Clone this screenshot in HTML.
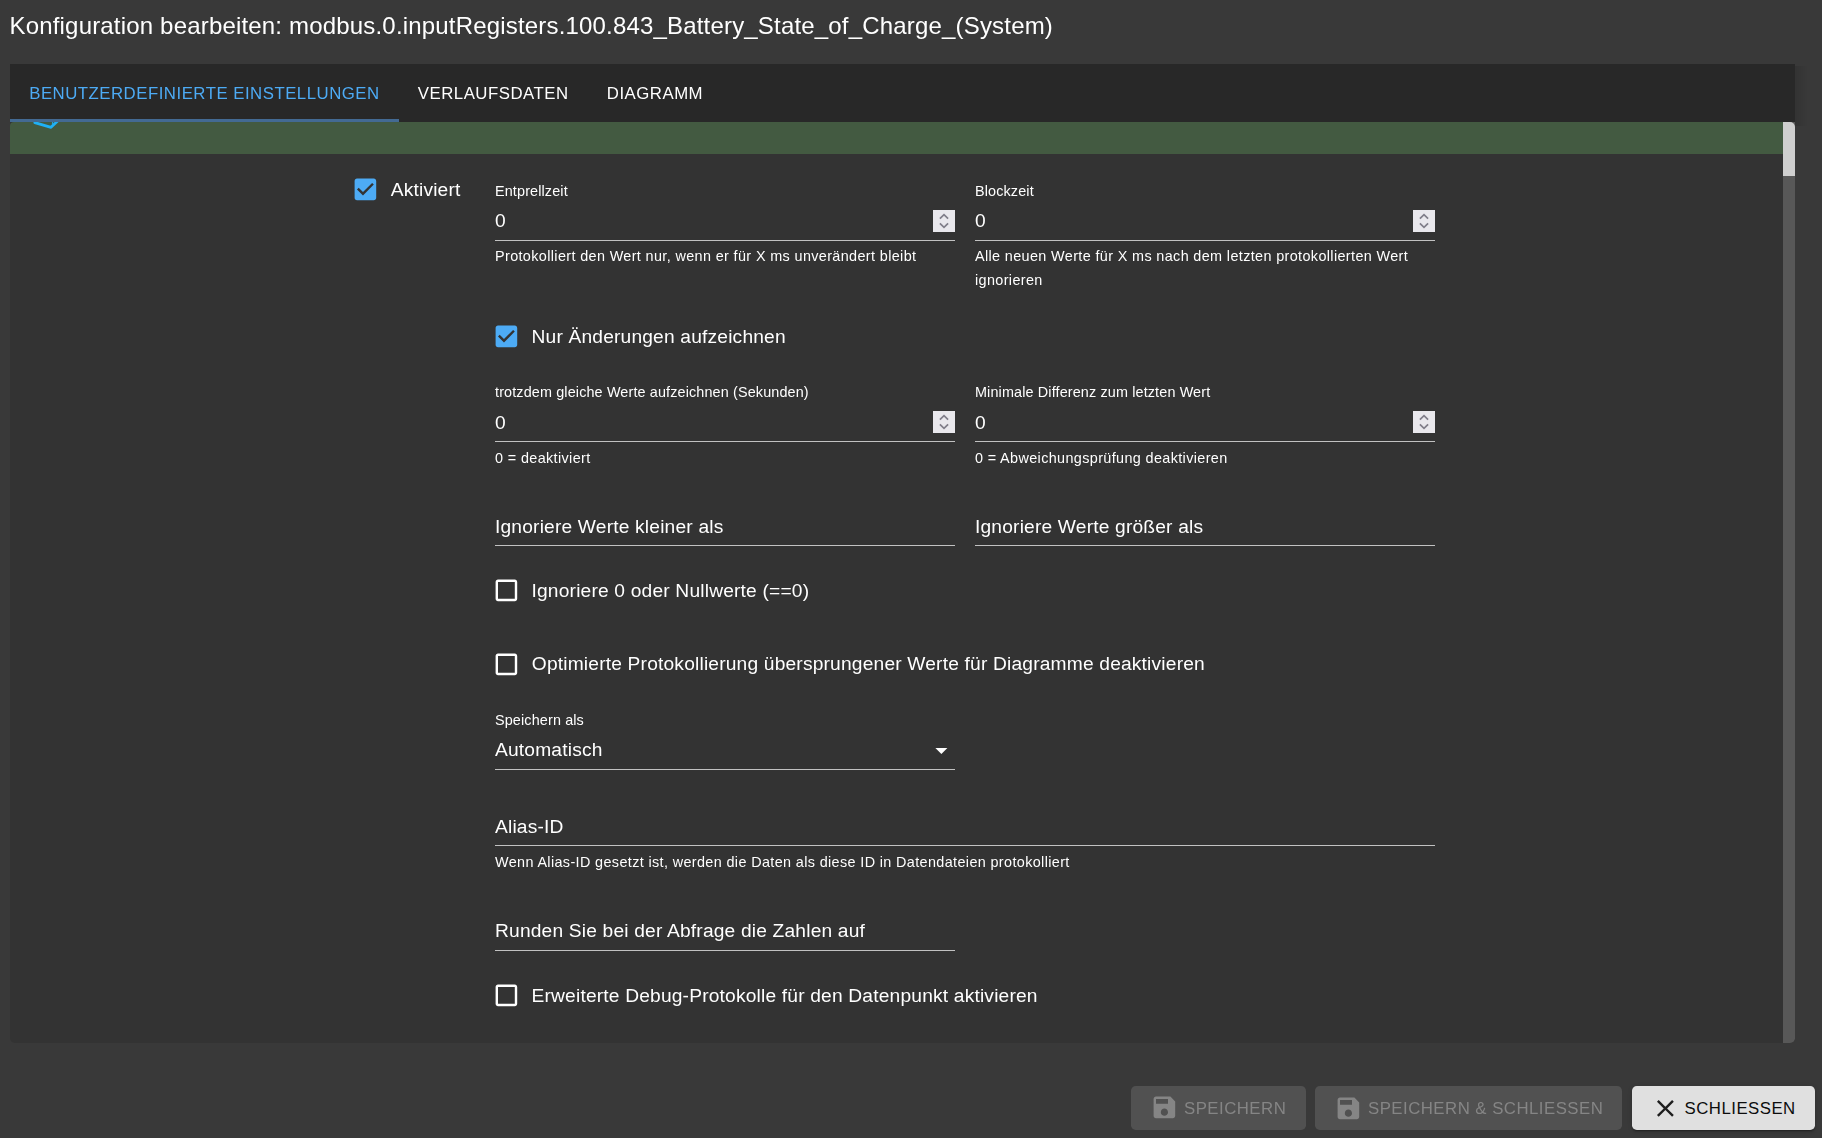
<!DOCTYPE html>
<html><head><meta charset="utf-8">
<style>
html,body{margin:0;padding:0;}
body{width:1822px;height:1138px;overflow:hidden;background:#393939;position:relative;font-family:"Liberation Sans",sans-serif;color:#fff;}
#root{position:absolute;left:0;top:0;width:1822px;height:1138px;will-change:transform;}
.a{position:absolute;white-space:nowrap;}
.title{left:9.5px;top:13.7px;font-size:24px;line-height:24px;letter-spacing:0.18px;}
.panel{position:absolute;left:10px;top:64px;width:1785px;height:979px;background:#333;border-radius:0 0 4.8px 4.8px;}
.tabbar{position:absolute;left:10px;top:64px;width:1785px;height:58px;background:#282828;}
.tab{font-size:16.8px;line-height:16.8px;letter-spacing:0.5px;top:85.8px;}
.ind{position:absolute;left:10px;top:119px;width:388.6px;height:3px;background:#436a93;}
.green{position:absolute;left:10px;top:122px;width:1773px;height:32px;background:#435a41;border-top-left-radius:4px;}
.sb{position:absolute;left:1783px;top:122px;width:12px;height:921px;background:#585858;border-bottom-right-radius:4.8px;}
.thumb{position:absolute;left:1783px;top:122px;width:12px;height:54px;background:#cfcfcf;border-top-right-radius:5px;}
.lbl{font-size:14.4px;line-height:14.4px;letter-spacing:0.135px;}
.inp{font-size:19.2px;line-height:19.2px;letter-spacing:0.18px;}
.help{font-size:14.4px;line-height:14.4px;letter-spacing:0.37px;}
.ul{position:absolute;height:1.2px;background:#c2c2c2;}
.cbl{font-size:19.2px;line-height:19.2px;letter-spacing:0.18px;}
.btn{position:absolute;top:1086px;height:44px;border-radius:4.8px;}
.btxt{font-size:16.8px;line-height:16.8px;letter-spacing:0.48px;top:1100.8px;}
</style></head><body>
<div class="btn" style="left:1632px;width:183px;background:#e0e0e0;box-shadow:0 3px 1px -2px rgba(0,0,0,.2),0 2px 2px 0 rgba(0,0,0,.14),0 1px 5px 0 rgba(0,0,0,.12)"></div>
<svg class="a" style="left:1651.1px;top:1094.3px" width="28.8" height="28.8" viewBox="0 0 24 24"><path d="M19 6.41 17.59 5 12 10.59 6.41 5 5 6.41 10.59 12 5 17.59 6.41 19 12 13.41 17.59 19 19 17.59 13.41 12z" fill="#1e1e1e"/></svg>
<div class="a btxt" style="left:1684.6px;color:#0d0d0d">SCHLIESSEN</div>
<div id="root">
<div class="a title">Konfiguration bearbeiten: modbus.0.inputRegisters.100.843_Battery_State_of_Charge_(System)</div>
<div class="a" style="left:1795px;top:66px;width:12px;height:60px;background:linear-gradient(90deg,rgba(0,0,0,.10),rgba(0,0,0,0))"></div>
<div class="panel"></div>
<div class="green"></div>
<svg class="a" style="left:30px;top:100px" width="36" height="36" viewBox="0 0 36 36"><path d="M4.8 22.6 L21 27.3 L30.3 18.6" fill="none" stroke="#1fb0f5" stroke-width="2.8" stroke-linejoin="round" stroke-linecap="round"/><path d="M22.8 21 L22.3 24.5" stroke="#1fb0f5" stroke-width="0.9"/></svg>
<div class="tabbar"></div>
<div class="a tab" style="left:29.2px;color:#4dabf5">BENUTZERDEFINIERTE EINSTELLUNGEN</div>
<div class="a tab" style="left:417.8px">VERLAUFSDATEN</div>
<div class="a tab" style="left:606.8px">DIAGRAMM</div>
<div class="ind"></div>
<div class="sb"></div>
<div class="thumb"></div>
<svg class="a" style="left:351.1px;top:174.7px" width="28.8" height="28.8" viewBox="0 0 24 24"><path d="M19 3H5c-1.11 0-2 .9-2 2v14c0 1.1.89 2 2 2h14c1.11 0 2-.9 2-2V5c0-1.1-.89-2-2-2zm-9 14l-5-5 1.41-1.41L10 14.17l7.59-7.59L19 8l-9 9z" fill="#4dabf5"/></svg>
<div class="a cbl" style="left:390.7px;top:179.75px">Aktiviert</div>
<div class="a lbl" style="left:495px;top:184.01px;">Entprellzeit</div>
<div class="a inp" style="left:495px;top:210.75px;">0</div>
<div class="ul" style="left:495px;top:239.9px;width:460px"></div>
<svg class="a" style="left:933px;top:210px" width="22" height="22" viewBox="0 0 22 22"><rect width="22" height="22" fill="#e9e8ed"/><path d="M6.9 8.7 L11 4.6 L15.1 8.7 M6.9 13.3 L11 17.4 L15.1 13.3" fill="none" stroke="#807e8a" stroke-width="1.7"/></svg>
<div class="a help" style="left:495px;top:248.81px;">Protokolliert den Wert nur, wenn er für X ms unverändert bleibt</div>
<div class="a lbl" style="left:975px;top:184.01px;">Blockzeit</div>
<div class="a inp" style="left:975px;top:210.75px;">0</div>
<div class="ul" style="left:975px;top:239.9px;width:460px"></div>
<svg class="a" style="left:1413px;top:210px" width="22" height="22" viewBox="0 0 22 22"><rect width="22" height="22" fill="#e9e8ed"/><path d="M6.9 8.7 L11 4.6 L15.1 8.7 M6.9 13.3 L11 17.4 L15.1 13.3" fill="none" stroke="#807e8a" stroke-width="1.7"/></svg>
<div class="a help" style="left:975px;top:248.81px;">Alle neuen Werte für X ms nach dem letzten protokollierten Wert</div>
<div class="a help" style="left:975px;top:272.71px;">ignorieren</div>
<svg class="a" style="left:491.9px;top:321.9px" width="28.8" height="28.8" viewBox="0 0 24 24"><path d="M19 3H5c-1.11 0-2 .9-2 2v14c0 1.1.89 2 2 2h14c1.11 0 2-.9 2-2V5c0-1.1-.89-2-2-2zm-9 14l-5-5 1.41-1.41L10 14.17l7.59-7.59L19 8l-9 9z" fill="#4dabf5"/></svg>
<div class="a cbl" style="left:531.5px;top:326.75px">Nur Änderungen aufzeichnen</div>
<div class="a lbl" style="left:495px;top:384.81px;">trotzdem gleiche Werte aufzeichnen (Sekunden)</div>
<div class="a inp" style="left:495px;top:412.75px;">0</div>
<div class="ul" style="left:495px;top:440.9px;width:460px"></div>
<svg class="a" style="left:933px;top:411px" width="22" height="22" viewBox="0 0 22 22"><rect width="22" height="22" fill="#e9e8ed"/><path d="M6.9 8.7 L11 4.6 L15.1 8.7 M6.9 13.3 L11 17.4 L15.1 13.3" fill="none" stroke="#807e8a" stroke-width="1.7"/></svg>
<div class="a help" style="left:495px;top:450.81px;">0 = deaktiviert</div>
<div class="a lbl" style="left:975px;top:384.81px;">Minimale Differenz zum letzten Wert</div>
<div class="a inp" style="left:975px;top:412.75px;">0</div>
<div class="ul" style="left:975px;top:440.9px;width:460px"></div>
<svg class="a" style="left:1413px;top:411px" width="22" height="22" viewBox="0 0 22 22"><rect width="22" height="22" fill="#e9e8ed"/><path d="M6.9 8.7 L11 4.6 L15.1 8.7 M6.9 13.3 L11 17.4 L15.1 13.3" fill="none" stroke="#807e8a" stroke-width="1.7"/></svg>
<div class="a help" style="left:975px;top:450.81px;">0 = Abweichungsprüfung deaktivieren</div>
<div class="a inp" style="left:495px;top:516.75px;">Ignoriere Werte kleiner als</div>
<div class="ul" style="left:495px;top:544.7px;width:460px"></div>
<div class="a inp" style="left:975px;top:516.75px;">Ignoriere Werte größer als</div>
<div class="ul" style="left:975px;top:544.7px;width:460px"></div>
<svg class="a" style="left:491.9px;top:575.9px" width="28.8" height="28.8" viewBox="0 0 24 24"><path d="M19 5v14H5V5h14m0-2H5c-1.1 0-2 .9-2 2v14c0 1.1.9 2 2 2h14c1.1 0 2-.9 2-2V5c0-1.1-.9-2-2-2z" fill="#fff"/></svg>
<div class="a cbl" style="left:531.5px;top:580.75px">Ignoriere 0 oder Nullwerte (==0)</div>
<svg class="a" style="left:491.9px;top:649.9px" width="28.8" height="28.8" viewBox="0 0 24 24"><path d="M19 5v14H5V5h14m0-2H5c-1.1 0-2 .9-2 2v14c0 1.1.9 2 2 2h14c1.1 0 2-.9 2-2V5c0-1.1-.9-2-2-2z" fill="#fff"/></svg>
<div class="a cbl" style="left:531.8px;top:653.75px">Optimierte Protokollierung übersprungener Werte für Diagramme deaktivieren</div>
<div class="a lbl" style="left:495px;top:713.01px;">Speichern als</div>
<div class="a inp" style="left:495px;top:740.05px;">Automatisch</div>
<div class="ul" style="left:495px;top:768.8px;width:460px"></div>
<svg class="a" style="left:927px;top:736.1px" width="28.8" height="28.8" viewBox="0 0 24 24"><path d="M7 10l5 5 5-5z" fill="#fff"/></svg>
<div class="a inp" style="left:495px;top:816.75px;">Alias-ID</div>
<div class="ul" style="left:495px;top:844.8px;width:940px"></div>
<div class="a help" style="left:495px;top:855.31px;">Wenn Alias-ID gesetzt ist, werden die Daten als diese ID in Datendateien protokolliert</div>
<div class="a inp" style="left:495px;top:920.75px;">Runden Sie bei der Abfrage die Zahlen auf</div>
<div class="ul" style="left:495px;top:949.7px;width:460px"></div>
<svg class="a" style="left:491.9px;top:980.7px" width="28.8" height="28.8" viewBox="0 0 24 24"><path d="M19 5v14H5V5h14m0-2H5c-1.1 0-2 .9-2 2v14c0 1.1.9 2 2 2h14c1.1 0 2-.9 2-2V5c0-1.1-.9-2-2-2z" fill="#fff"/></svg>
<div class="a cbl" style="left:531.5px;top:985.75px">Erweiterte Debug-Protokolle für den Datenpunkt aktivieren</div>
<div class="btn" style="left:1131px;width:175px;background:#515151"></div>
<svg class="a" style="left:1150.4px;top:1093.4px" width="28.8" height="28.8" viewBox="0 0 24 24"><path d="M17 3H5c-1.11 0-2 .9-2 2v14c0 1.1.89 2 2 2h14c1.1 0 2-.9 2-2V7l-4-4zm-5 16c-1.66 0-3-1.34-3-3s1.34-3 3-3 3 1.34 3 3-1.34 3-3 3zm3-10H5V5h10v4z" fill="#858585"/></svg>
<div class="a btxt" style="left:1184px;color:#858585">SPEICHERN</div>
<div class="btn" style="left:1315.2px;width:306.8px;background:#515151"></div>
<svg class="a" style="left:1334.2px;top:1093.6px" width="28.8" height="28.8" viewBox="0 0 24 24"><path d="M17 3H5c-1.11 0-2 .9-2 2v14c0 1.1.89 2 2 2h14c1.1 0 2-.9 2-2V7l-4-4zm-5 16c-1.66 0-3-1.34-3-3s1.34-3 3-3 3 1.34 3 3-1.34 3-3 3zm3-10H5V5h10v4z" fill="#858585"/></svg>
<div class="a btxt" style="left:1368px;color:#858585">SPEICHERN &amp; SCHLIESSEN</div>
</div></body></html>
